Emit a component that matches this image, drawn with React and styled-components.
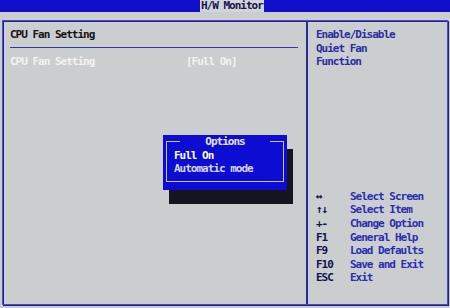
import { styled, createGlobalStyle } from 'styled-components';

const GlobalStyle = createGlobalStyle`
  html, body {
    margin: 0;
    padding: 0;
    background: #cacece;
  }
  body {
    font-family: 'DejaVu Sans Mono', 'Liberation Mono', monospace;
  }
`;

const Screen = styled.div`
  width: 450px;
  height: 308px;
  display: flex;
  flex-direction: column;
  background: #cacece;
  font-size: 11px;
  font-weight: 700;
  letter-spacing: -1px;
  line-height: 13.6px;
  overflow: hidden;
`;
const TopBar = styled.div`
  height: 12px;
  background: #1010cc;
  display: flex;
`;
const Tab = styled.div`
  margin-left: 200px;
  padding: 0 1px;
  height: 12px;
  line-height: 12px;
  background: #d2d4dc;
  color: #14144a;
  white-space: nowrap;
`;
const Frame = styled.div`
  position: relative;
  flex: 1;
  margin: 8px 2px 3px 2px;
  display: flex;
  border: 1px solid #4a4ad6;
  box-shadow: inset 1px 1px 0 #22228a, 1px 1px 0 #22226a;
`;
const LeftPanel = styled.div`
  flex: 1;
  padding: 7px 8px 0 7px;
  display: flex;
  flex-direction: column;
`;
const RightPanel = styled.div`
  width: 131px;
  border-left: 2px solid #2a2a96;
  padding: 7px 0 19px 8px;
  display: flex;
  flex-direction: column;
`;
const Heading = styled.div`
  color: #141414;
`;
const Rule = styled.div`
  height: 1px;
  background: #3434a8;
  margin: 5px 0 7px 0;
`;
const SettingRow = styled.div`
  display: flex;
  color: #f2f2f2;
`;
const SettingLabel = styled.div`
  width: 176px;
`;
const HelpText = styled.div`
  color: #2c2ca6;
`;
const KeyList = styled.div`
  margin-top: auto;
  display: flex;
  flex-direction: column;
`;
const KeyRow = styled.div`
  display: flex;
`;
const Key = styled.div`
  width: 34px;
  color: #12124e;
`;
const KeyDesc = styled.div`
  color: #2c2cb4;
`;
const Popup = styled.div`
  position: absolute;
  left: 160px;
  top: 114px;
  width: 118px;
  height: 55px;
  padding: 0 3px;
  background: #0c0cd2;
  box-shadow: 6px 14px 0 #15151f;
`;
const PopupBox = styled.fieldset`
  margin: 0;
  padding: 0 7px 5px 7px;
  border: 1px solid #c4c4e4;
  height: 47px;
  box-sizing: border-box;
`;
const PopupTitle = styled.legend`
  margin: 0 auto;
  padding: 0 25px;
  color: #e4e4ee;
`;
const Option = styled.div`
  color: ${(props) => (props.$active ? '#ffffff' : '#d6d6e6')};
  white-space: nowrap;
`;

function App() {
  const keys = [
    ['↔', 'Select Screen'],
    ['↑↓', 'Select Item'],
    ['+-', 'Change Option'],
    ['F1', 'General Help'],
    ['F9', 'Load Defaults'],
    ['F10', 'Save and Exit'],
    ['ESC', 'Exit'],
  ];
  return (
    <Screen>
      <GlobalStyle />
      <TopBar>
        <Tab>H/W Monitor</Tab>
      </TopBar>
      <Frame>
        <LeftPanel>
          <Heading>CPU Fan Setting</Heading>
          <Rule />
          <SettingRow>
            <SettingLabel>CPU Fan Setting</SettingLabel>
            <div>[Full On]</div>
          </SettingRow>
        </LeftPanel>
        <RightPanel>
          <HelpText>Enable/Disable</HelpText>
          <HelpText>Quiet Fan</HelpText>
          <HelpText>Function</HelpText>
          <KeyList>
            {keys.map(([k, d]) => (
              <KeyRow key={k}>
                <Key>{k}</Key>
                <KeyDesc>{d}</KeyDesc>
              </KeyRow>
            ))}
          </KeyList>
        </RightPanel>
        <Popup>
          <PopupBox>
            <PopupTitle>Options</PopupTitle>
            <Option $active>Full On</Option>
            <Option>Automatic mode</Option>
          </PopupBox>
        </Popup>
      </Frame>
    </Screen>
  );
}

export default App;
